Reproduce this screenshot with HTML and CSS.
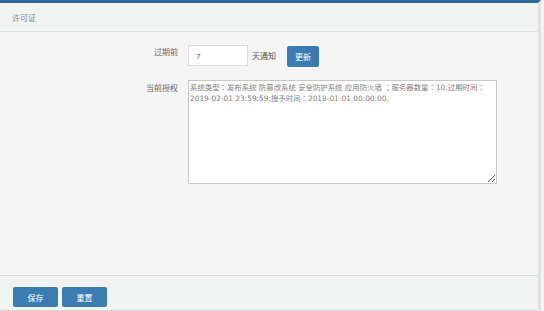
FILE: index.html
```html
<!DOCTYPE html>
<html>
<head>
<meta charset="utf-8">
<link rel="stylesheet" href="styles.css">
</head>
<body>
<div class="panel">
  <div class="panel-head">许可证</div>
  <div class="panel-body">
    <div class="row row-first">
      <label class="label">过期前</label>
      <div class="controls">
        <input class="input" type="text" value="7">
        <span class="unit">天通知</span>
        <button class="btn btn-update">更新</button>
      </div>
    </div>
    <div class="row">
      <label class="label">当前授权</label>
      <div class="controls">
        <textarea class="textarea">系统类型：发布系统 防篡改系统 安全防护系统 应用防火墙 ；服务器数量：10;过期时间：2019-02-01 23:59:59;授予时间：2018-01-01 00:00:00。</textarea>
      </div>
    </div>
  </div>
  <div class="panel-foot">
    <button class="btn btn-foot">保存</button>
    <button class="btn btn-foot">重置</button>
  </div>
</div>
</body>
</html>
```
FILE: styles.css
```css
html, body {
  margin: 0;
  padding: 0;
  background: #f4f4f4;
  font-family: "Open Sans", "Noto Sans CJK SC", sans-serif;
}
.panel {
  width: 541px;
  height: 311px;
  box-sizing: border-box;
  border-right: 3px solid #e2e2e2;
  border-top: 3px solid #2d6a9c;
  display: flex;
  flex-direction: column;
}
.panel-head {
  height: 29px;
  box-sizing: border-box;
  background: #f1f2f2;
  border-bottom: 1px solid #dfe1e6;
  padding-left: 12px;
  font-size: 8px;
  color: #888;
  display: flex;
  align-items: center;
}
.panel-body {
  flex: 1;
  background: #f5f5f5;
  padding-top: 12px;
}
.row {
  display: flex;
  margin-bottom: 13px;
}
.label {
  width: 178px;
  text-align: right;
  font-size: 8px;
  color: #666;
  padding-top: 2px;
  margin-right: 10px;
  line-height: 12px;
}
.controls {
  display: flex;
  align-items: center;
}
.input {
  width: 60px;
  height: 21px;
  box-sizing: border-box;
  border: 1px solid #dcdcdc;
  background: #fff;
  padding: 0 7px;
  font-size: 8px;
  color: #666;
  font-family: inherit;
  outline: none;
}
.unit {
  font-size: 8px;
  color: #555;
  margin-left: 4px;
  margin-right: 11px;
}
.btn {
  border: none;
  background: #3b7db2;
  color: #fff;
  font-family: inherit;
  font-size: 8px;
  padding: 0;
  border-radius: 2px;
  cursor: pointer;
}
.btn-update {
  width: 32px;
  height: 21px;
  margin-top: 2px;
}
.textarea {
  width: 309px;
  height: 104px;
  box-sizing: border-box;
  border: 1px solid #c8c8c8;
  background: #fff;
  font-family: "DejaVu Sans", "Noto Sans CJK JP", sans-serif;
  font-size: 7.4px;
  line-height: 11px;
  color: #808080;
  padding: 1px 0 0 1px;
  margin: 0;
  resize: both;
  outline: none;
}
.panel-foot {
  height: 36px;
  box-sizing: border-box;
  background: #f1f2f2;
  border-top: 1px solid #dcdde1;
  border-bottom: 1px solid #d6d7da;
  padding: 11px 0 0 13px;
  display: flex;
  gap: 4px;
}
.btn-foot {
  width: 45px;
  height: 20px;
  background: #3c7db1;
}
```
